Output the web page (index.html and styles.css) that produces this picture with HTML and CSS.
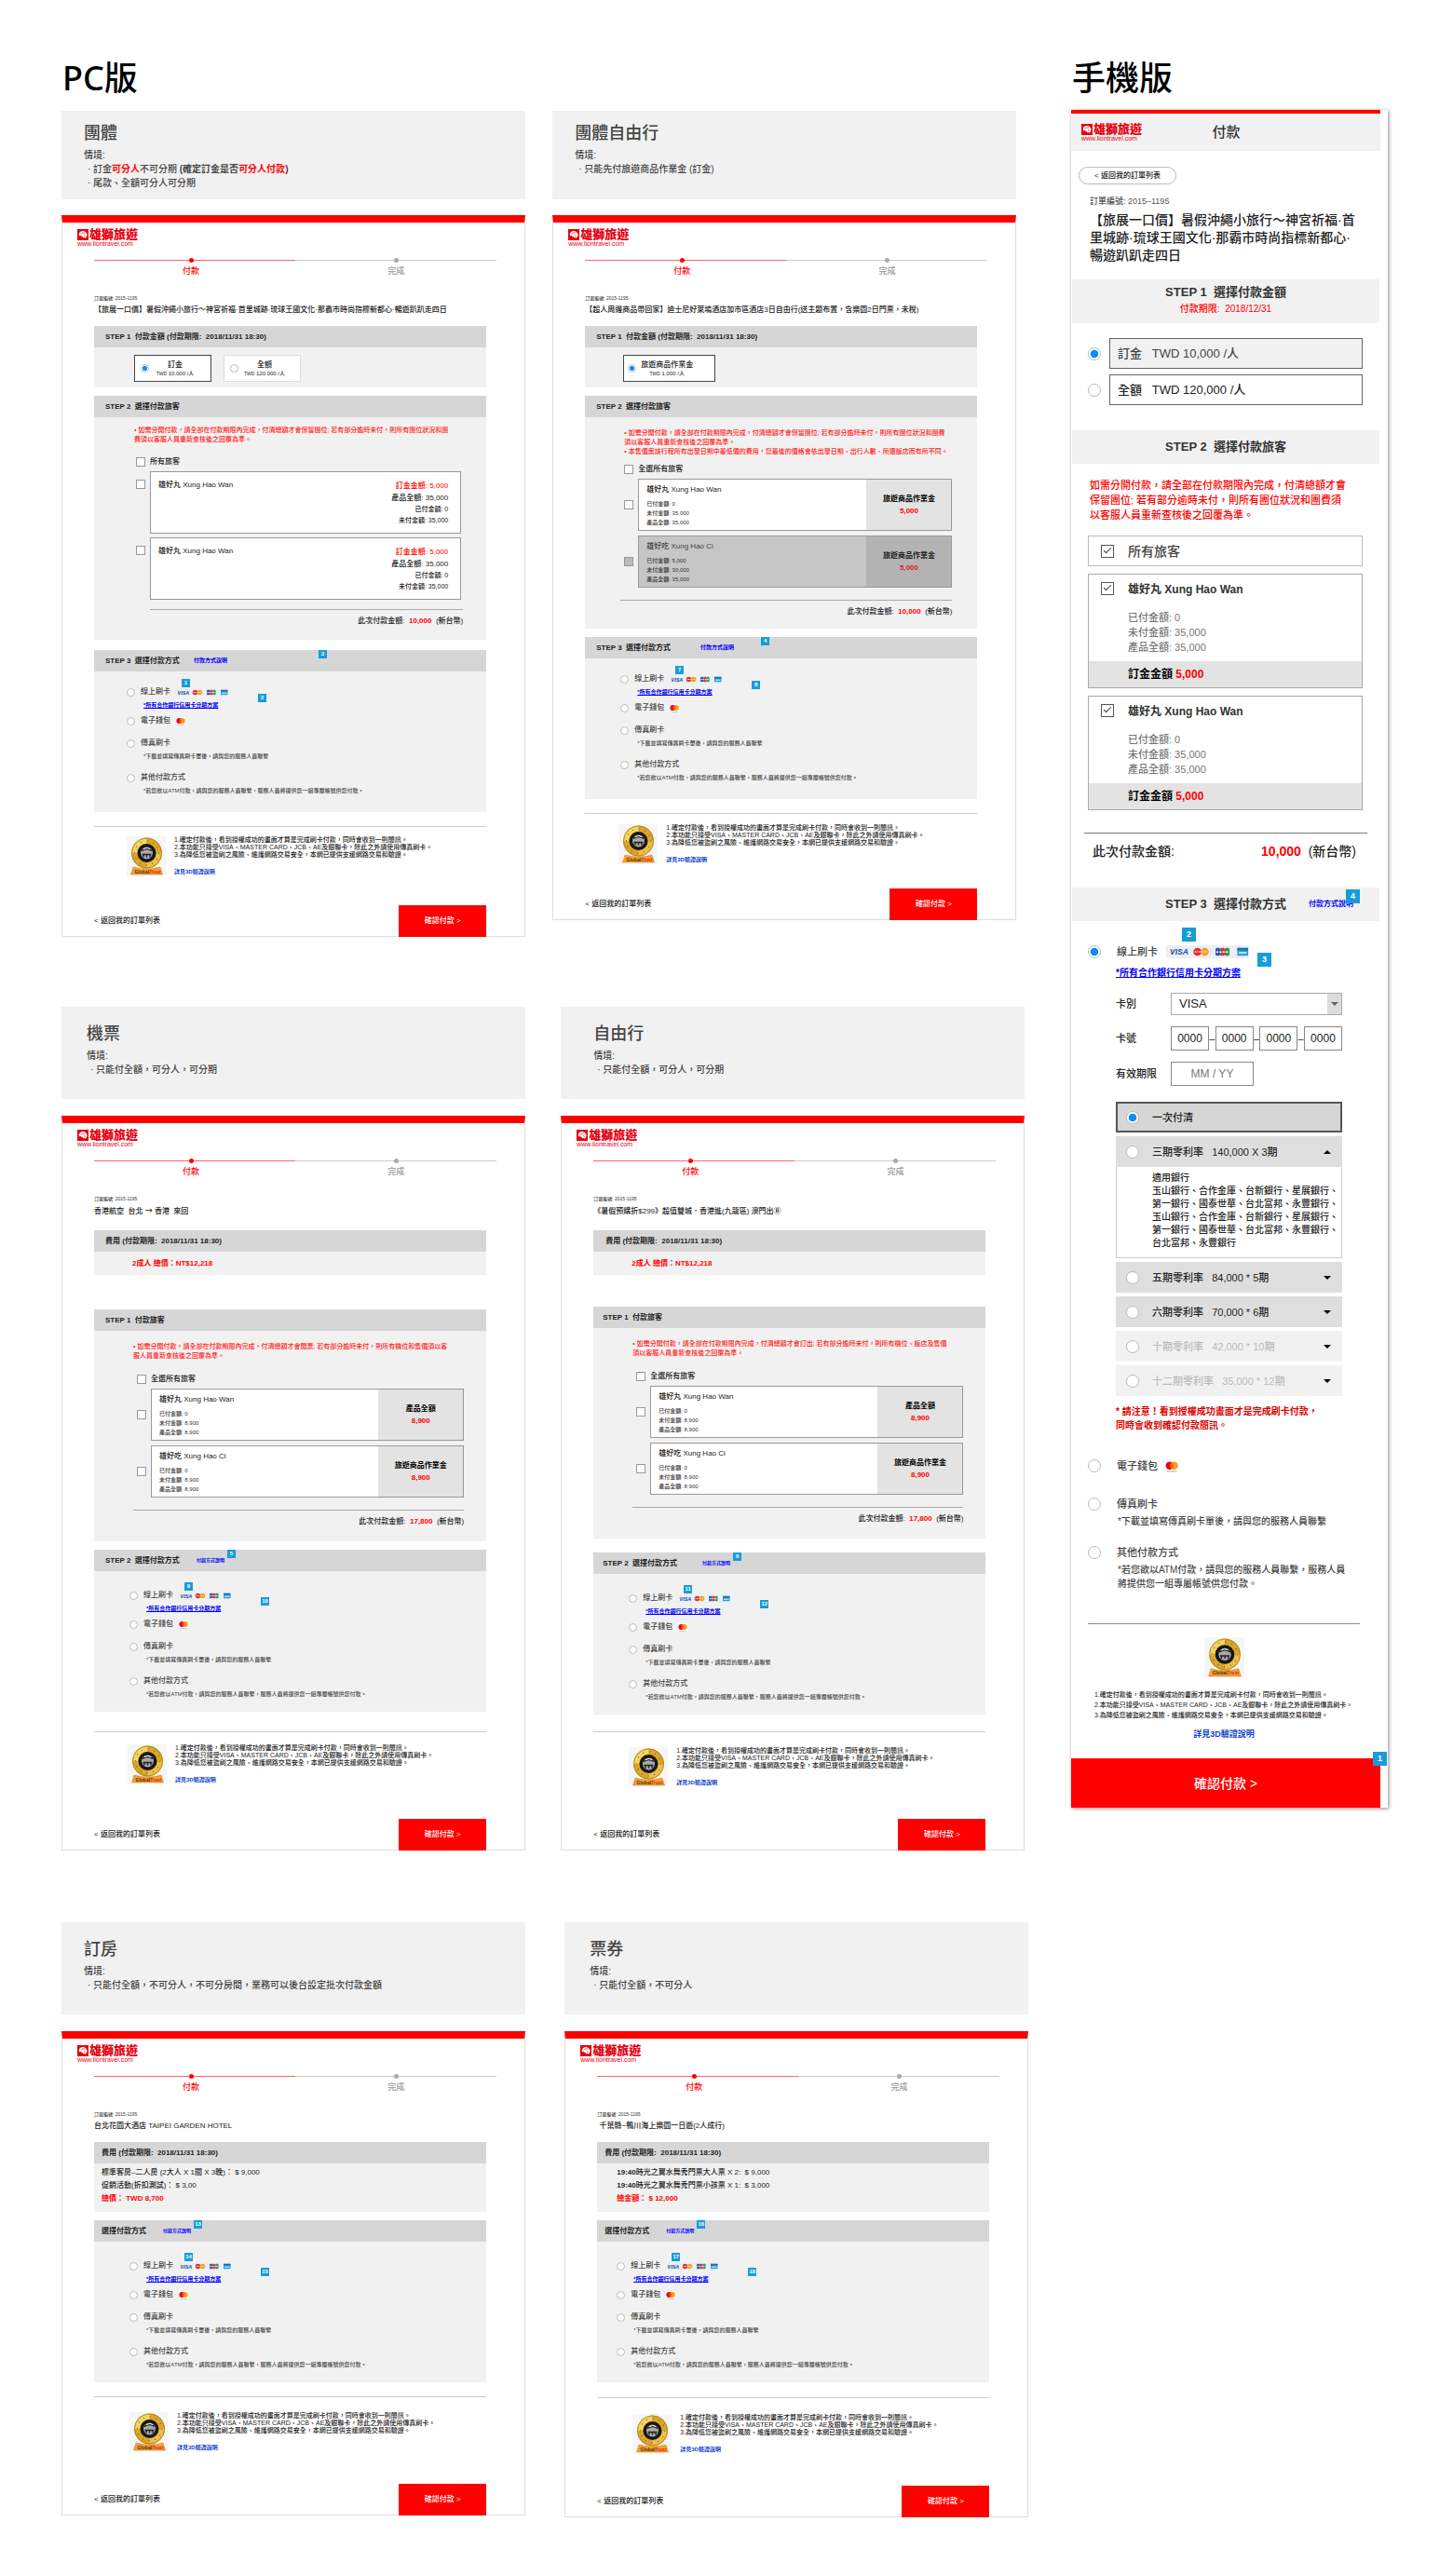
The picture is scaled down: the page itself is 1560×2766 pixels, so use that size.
FILE: index.html
```html
<!DOCTYPE html>
<html lang="zh-Hant">
<head>
<meta charset="utf-8">
<meta name="viewport" content="width=device-width, initial-scale=1">
<title>雄獅旅遊 付款流程</title>
<link rel="stylesheet" href="styles.css">
</head>
<body>
<svg class="sprite" aria-hidden="true">
  <symbol id="lion" viewBox="0 0 12 12">
    <rect width="12" height="12" fill="#e60012"/>
    <path d="M1.6 5.6C2.2 3 4.6 1.6 7 2.2c2 .4 3.4 2 3.6 4-.2 1.700-1.200 3-2.600 3.600l-.4-1.300-1 .9-.8-1.500-1.100.6-.3-1.400-2.200.2z" fill="#fff"/>
    <path d="M3.500 5.200c1-.9 2.300-.7 3 .1M5.500 3.600c1.500-.3 2.700.5 3.100 1.700M7 6.500c.8 0 1.500.5 1.700 1.300" fill="none" stroke="#e60012" stroke-width=".6"/>
  </symbol>
  <symbol id="cards" viewBox="0 0 57 9">
    <rect width="57" height="9" fill="#ebeff5"/>
    <text x="2.500" y="6.600" font-family="Liberation Sans, sans-serif" font-size="5.500" font-weight="700" font-style="italic" fill="#1a4f9c">VISA</text>
    <path d="M2.500 2.700h2l.8 1.600z" fill="#f2a72e"/>
    <circle cx="21.500" cy="4.500" r="2.800" fill="#e0322c"/><circle cx="26.500" cy="4.500" r="2.800" fill="#f4a020"/>
    <path d="M19.500 4.500h9" stroke="#fff" stroke-width=".8" stroke-dasharray="1 .5"/>
    <rect x="34" y="1.800" width="3.200" height="5.400" rx="1" fill="#2a5fb0"/><rect x="37.200" y="1.800" width="3.200" height="5.400" rx="1" fill="#d5304a"/><rect x="40.400" y="1.800" width="3.200" height="5.400" rx="1" fill="#2f9a4b"/>
    <path d="M34.500 4.600h8.600" stroke="#fff" stroke-width="1" stroke-dasharray="1.400 .8"/>
    <rect x="49" y="1.800" width="7.500" height="5.400" fill="#2c9ed3"/><path d="M49 1.800h7.500v1.700H49z" fill="#1b6eb0"/><path d="M50 5.200h5.500" stroke="#d9f1fb" stroke-width="1"/>
  </symbol>
  <symbol id="mc" viewBox="0 0 10 9">
    <rect width="10" height="9" fill="#fff"/>
    <circle cx="3.400" cy="4" r="3" fill="#eb001b"/><circle cx="6.800" cy="4" r="3" fill="#f79e1b"/>
    <path d="M5.100 1.500a3 3 0 0 1 0 5 3 3 0 0 1 0-5z" fill="#ff5f00"/>
    <path d="M1 8.300h8" stroke="#999" stroke-width=".6"/>
  </symbol>
  <symbol id="seal" viewBox="0 0 42 43">
    <rect width="42" height="43" fill="#f6f6f6"/>
    <circle cx="21.500" cy="18" r="16.500" fill="#d9a62b"/>
    <path d="M21.500 1.500A16.500 16.500 0 0 0 5 18h6a10.500 10.500 0 0 1 10.500-10.500z" fill="#f3d564"/>
    <path d="M21.500 34.500A16.500 16.500 0 0 0 38 18h-6a10.500 10.500 0 0 1-10.500 10.500z" fill="#eec04a"/>
    <circle cx="21.500" cy="18" r="16" fill="none" stroke="#a57a1a" stroke-width=".8"/>
    <circle cx="21.500" cy="18" r="13" fill="none" stroke="#5d430b" stroke-width="1.200" stroke-dasharray=".8 6"/>
    <circle cx="21.500" cy="18" r="10" fill="#171717"/>
    <circle cx="21.500" cy="18" r="6.500" fill="#a9a9a9"/>
    <path d="M16 15.500q5.500-4 11 0M16.500 19.500h10M18 22.500v-3m3.500 3v-3m3.500 3v-3" fill="none" stroke="#222" stroke-width="1.400"/>
    <path d="M18 13.500q4-2 7 0" stroke="#eee" stroke-width="1" fill="none"/>
    <path d="M7 33q14.500 4 29 0l2.500 8h-34z" fill="#f0a035" stroke="#c96d12" stroke-width=".4"/>
    <text x="8.500" y="39.500" font-family="Liberation Sans, sans-serif" font-size="5" font-weight="700" fill="#5a2c00">Global<tspan fill="#e2221a" font-style="italic">Trust</tspan></text>
  </symbol>
</svg>

<main class="board">
<div class="pc">
<h1 class="board-title">PC版</h1>

<div class="pair pair--one">

<section class="case">
  <header class="intro intro--short">
    <h2>團體</h2>
    <p>情境:</p>
    <ul><li>訂金<b class="red">可分人</b>不可分期 <b>(確定訂金是否<span class="red">可分人付款</span>)</b></li><li>尾款、全額可分人可分期</li></ul>
  </header>
  <article class="screen">
    <a class="logo" href="#"><span class="logo-row"><svg class="logo-mark"><use href="#lion"/></svg><span class="logo-name">雄獅旅遊</span></span><span class="logo-url">www.liontravel.com</span></a>
    <ol class="steps"><li class="on">付款</li><li>完成</li></ol>
    <p class="order">訂單編號: 2015-1195</p>
    <h3 class="tour">【旅展一口價】暑假沖繩小旅行～神宮祈福·首里城跡·琉球王國文化·那霸市時尚指標新都心·暢遊趴趴走四日</h3>
    <section class="block">
      <h4 class="bar">STEP 1&nbsp; 付款金額 (付款期限:&nbsp; 2018/11/31 18:30)</h4>
      <div class="amounts">
        <label class="amount amount--on"><input class="radio" type="radio" name="a1" checked><span class="amount-text">訂金<small><i>TWD</i> 10,000 /人</small></span></label>
        <label class="amount"><input class="radio" type="radio" name="a1"><span class="amount-text">全額<small><i>TWD</i> 120,000 /人</small></span></label>
      </div>
    </section>
    <section class="block gap-9">
      <h4 class="bar">STEP 2&nbsp; 選擇付款旅客</h4>
      <div class="people people--first">
        <p class="notice">• 如需分開付款，請全部在付款期限內完成，付清總額才會保留團位; 若有部分逾時未付，則所有團位狀況和團<br>費須以客服人員重新查核後之回覆為準。</p>
        <label class="all"><input class="check" type="checkbox">所有旅客</label>
        <label class="person person--top"><input class="check" type="checkbox"><span class="card card--wide"><span class="name">雄好丸 Xung Hao Wan</span><span class="sums"><span class="red">訂金金額: 5,000</span><span>產品全額: 35,000</span><small>已付金額: 0</small><small>未付金額: 35,000</small></span></span></label>
        <label class="person person--top"><input class="check" type="checkbox"><span class="card card--wide"><span class="name">雄好丸 Xung Hao Wan</span><span class="sums"><span class="red">訂金金額: 5,000</span><span>產品全額: 35,000</span><small>已付金額: 0</small><small>未付金額: 35,000</small></span></span></label>
        <p class="total">此次付款金額:&nbsp; <b class="red">10,000</b>&nbsp; (新台幣)</p>
      </div>
    </section>
    <section class="block gap-11">
      <h4 class="bar">STEP 3&nbsp; 選擇付款方式 <span class="help help--bold"><a href="#">付款方式說明</a><mark class="badge badge--far">3</mark></span></h4>
      <div class="methods">
        <div class="pay pay--card"><label class="pay-row"><input class="radio" type="radio" name="p1">線上刷卡</label><span class="brands"><svg class="strip"><use href="#cards"/></svg><mark class="badge badge--up">1</mark><mark class="badge badge--side">2</mark></span><a class="plan" href="#">*所有合作銀行信用卡分期方案</a></div>
        <div class="pay"><label class="pay-row"><input class="radio" type="radio" name="p1">電子錢包<svg class="wallet"><use href="#mc"/></svg></label></div>
        <div class="pay"><label class="pay-row"><input class="radio" type="radio" name="p1">傳真刷卡</label><p class="note">*下載並填寫傳真刷卡單後，請與您的服務人員聯繫</p></div>
        <div class="pay"><label class="pay-row"><input class="radio" type="radio" name="p1">其他付款方式</label><p class="note">*若您欲以ATM付款，請與您的服務人員聯繫，服務人員將提供您一組專屬帳號供您付款。</p></div>
      </div>
    </section>
    <section class="safety">
      <svg class="seal"><use href="#seal"/></svg>
      <div><ol class="rules"><li>1.確定付款後，看到授權成功的畫面才算是完成刷卡付款，同時會收到一則簡訊。</li><li>2.本功能只接受VISA、MASTER CARD、JCB、AE及銀聯卡，除此之外請使用傳真刷卡。</li><li>3.為降低您被盜刷之風險、維護網路交易安全，本網已提供支援網路交易和驗證。</li></ol><a class="more" href="#">詳見3D驗證說明</a></div>
    </section>
    <footer class="foot"><a href="#">&lt; 返回我的訂單列表</a><button class="confirm" type="button">確認付款 &gt;</button></footer>
  </article>
</section>

<section class="case case--b">
  <header class="intro intro--short">
    <h2>團體自由行</h2>
    <p>情境:</p>
    <ul><li>只能先付旅遊商品作業金 (訂金)</li></ul>
  </header>
  <article class="screen">
    <a class="logo" href="#"><span class="logo-row"><svg class="logo-mark"><use href="#lion"/></svg><span class="logo-name">雄獅旅遊</span></span><span class="logo-url">www.liontravel.com</span></a>
    <ol class="steps"><li class="on">付款</li><li>完成</li></ol>
    <p class="order">訂單編號: 2015-1195</p>
    <h3 class="tour">【超人周邊商品帶回家】迪士尼好萊塢酒店加市區酒店3日自由行(送主題布置，含樂園2日門票，未稅)</h3>
    <section class="block">
      <h4 class="bar">STEP 1&nbsp; 付款金額 (付款期限:&nbsp; 2018/11/31 18:30)</h4>
      <div class="amounts">
        <label class="amount amount--on amount--long"><input class="radio" type="radio" name="a2" checked><span class="amount-text">旅遊商品作業金<small><i>TWD</i> 1,000 /人</small></span></label>
      </div>
    </section>
    <section class="block gap-9">
      <h4 class="bar">STEP 2&nbsp; 選擇付款旅客</h4>
      <div class="people">
        <p class="notice">• 如需分開付款，請全部在付款期限內完成，付清總額才會保留團位; 若有部分逾時未付，則所有團位狀況和團費<br>須以客服人員重新查核後之回覆為準。<br>• 本售價案該行程所有出發日期中最低價的費用，您最後的價格會依出發日期、出行人數、所選飯店而有所不同。</p>
        <label class="all"><input class="check" type="checkbox">全選所有旅客</label>
        <label class="person"><input class="check" type="checkbox"><span class="card"><span class="detail"><span class="name">雄好丸 Xung Hao Wan</span><small>已付金額: 0</small><small>未付金額: 35,000</small><small>產品全額: 35,000</small></span><b class="due">旅遊商品作業金<span class="red">5,000</span></b></span></label>
        <label class="person"><input class="check" type="checkbox" disabled><span class="card card--off"><span class="detail"><span class="name">雄好吃 Xung Hao Ci</span><small>已付金額: 5,000</small><small>未付金額: 30,000</small><small>產品全額: 35,000</small></span><b class="due">旅遊商品作業金<span class="red">5,000</span></b></span></label>
        <p class="total">此次付款金額:&nbsp; <b class="red">10,000</b>&nbsp; (新台幣)</p>
      </div>
    </section>
    <section class="block gap-9">
      <h4 class="bar">STEP 3&nbsp; 選擇付款方式 <span class="help help--bold"><a href="#">付款方式說明</a><mark class="badge badge--mid">4</mark></span></h4>
      <div class="methods">
        <div class="pay pay--card"><label class="pay-row"><input class="radio" type="radio" name="p2">線上刷卡</label><span class="brands"><svg class="strip"><use href="#cards"/></svg><mark class="badge badge--up">7</mark><mark class="badge badge--side">8</mark></span><a class="plan" href="#">*所有合作銀行信用卡分期方案</a></div>
        <div class="pay"><label class="pay-row"><input class="radio" type="radio" name="p2">電子錢包<svg class="wallet"><use href="#mc"/></svg></label></div>
        <div class="pay"><label class="pay-row"><input class="radio" type="radio" name="p2">傳真刷卡</label><p class="note">*下載並填寫傳真刷卡單後，請與您的服務人員聯繫</p></div>
        <div class="pay"><label class="pay-row"><input class="radio" type="radio" name="p2">其他付款方式</label><p class="note">*若您欲以ATM付款，請與您的服務人員聯繫，服務人員將提供您一組專屬帳號供您付款。</p></div>
      </div>
    </section>
    <section class="safety">
      <svg class="seal"><use href="#seal"/></svg>
      <div><ol class="rules"><li>1.確定付款後，看到授權成功的畫面才算是完成刷卡付款，同時會收到一則簡訊。</li><li>2.本功能只接受VISA、MASTER CARD、JCB、AE及銀聯卡，除此之外請使用傳真刷卡。</li><li>3.為降低您被盜刷之風險、維護網路交易安全，本網已提供支援網路交易和驗證。</li></ol><a class="more" href="#">詳見3D驗證說明</a></div>
    </section>
    <footer class="foot"><a href="#">&lt; 返回我的訂單列表</a><button class="confirm" type="button">確認付款 &gt;</button></footer>
  </article>
</section>
</div>

<div class="pair pair--two">

<section class="case case--c">
  <header class="intro">
    <h2>機票</h2>
    <p>情境:</p>
    <ul><li>只能付全額，可分人，可分期</li></ul>
  </header>
  <article class="screen">
    <a class="logo" href="#"><span class="logo-row"><svg class="logo-mark"><use href="#lion"/></svg><span class="logo-name">雄獅旅遊</span></span><span class="logo-url">www.liontravel.com</span></a>
    <ol class="steps"><li class="on">付款</li><li>完成</li></ol>
    <p class="order">訂單編號: 2015-1195</p>
    <h3 class="tour">香港航空&nbsp; 台北 <span class="sign">→</span> 香港&nbsp; 來回</h3>
    <section class="block">
      <h4 class="bar">費用 (付款期限:&nbsp; 2018/11/31 18:30)</h4>
      <p class="fare"><b class="red">2成人 總價：NT$12,218</b></p>
    </section>
    <section class="block gap-37">
      <h4 class="bar">STEP 1&nbsp; 付款旅客</h4>
      <div class="people">
        <p class="notice">• 如需分開付款，請全部在付款期限內完成，付清總額才會開票; 若有部分逾時未付，則所有機位和售價須以客<br>服人員重新查核後之回覆為準。</p>
        <label class="all"><input class="check" type="checkbox">全選所有旅客</label>
        <label class="person"><input class="check" type="checkbox"><span class="card"><span class="detail"><span class="name">雄好丸 Xung Hao Wan</span><small>已付金額: 0</small><small>未付金額: 8,900</small><small>產品全額: 8,900</small></span><b class="due">產品全額<span class="red">8,900</span></b></span></label>
        <label class="person"><input class="check" type="checkbox"><span class="card"><span class="detail"><span class="name">雄好吃 Xung Hao Ci</span><small>已付金額: 0</small><small>未付金額: 8,900</small><small>產品全額: 8,900</small></span><b class="due">旅遊商品作業金<span class="red">8,900</span></b></span></label>
        <p class="total">此次付款金額:&nbsp; <b class="red">17,800</b>&nbsp; (新台幣)</p>
      </div>
    </section>
    <section class="block gap-9">
      <h4 class="bar">STEP 2&nbsp; 選擇付款方式 <span class="help"><a href="#">付款方式說明</a><mark class="badge badge--near">5</mark></span></h4>
      <div class="methods methods--low">
        <div class="pay pay--card"><label class="pay-row"><input class="radio" type="radio" name="p3">線上刷卡</label><span class="brands"><svg class="strip"><use href="#cards"/></svg><mark class="badge badge--up">9</mark><mark class="badge badge--side">10</mark></span><a class="plan" href="#">*所有合作銀行信用卡分期方案</a></div>
        <div class="pay"><label class="pay-row"><input class="radio" type="radio" name="p3">電子錢包<svg class="wallet"><use href="#mc"/></svg></label></div>
        <div class="pay"><label class="pay-row"><input class="radio" type="radio" name="p3">傳真刷卡</label><p class="note">*下載並填寫傳真刷卡單後，請與您的服務人員聯繫</p></div>
        <div class="pay"><label class="pay-row"><input class="radio" type="radio" name="p3">其他付款方式</label><p class="note">*若您欲以ATM付款，請與您的服務人員聯繫，服務人員將提供您一組專屬帳號供您付款。</p></div>
      </div>
    </section>
    <section class="safety">
      <svg class="seal"><use href="#seal"/></svg>
      <div><ol class="rules"><li>1.確定付款後，看到授權成功的畫面才算是完成刷卡付款，同時會收到一則簡訊。</li><li>2.本功能只接受VISA、MASTER CARD、JCB、AE及銀聯卡，除此之外請使用傳真刷卡。</li><li>3.為降低您被盜刷之風險、維護網路交易安全，本網已提供支援網路交易和驗證。</li></ol><a class="more" href="#">詳見3D驗證說明</a></div>
    </section>
    <footer class="foot"><a href="#">&lt; 返回我的訂單列表</a><button class="confirm" type="button">確認付款 &gt;</button></footer>
  </article>
</section>

<section class="case case--d">
  <header class="intro">
    <h2>自由行</h2>
    <p>情境:</p>
    <ul><li>只能付全額，可分人，可分期</li></ul>
  </header>
  <article class="screen">
    <a class="logo" href="#"><span class="logo-row"><svg class="logo-mark"><use href="#lion"/></svg><span class="logo-name">雄獅旅遊</span></span><span class="logo-url">www.liontravel.com</span></a>
    <ol class="steps"><li class="on">付款</li><li>完成</li></ol>
    <p class="order">訂單編號: 2015-1195</p>
    <h3 class="tour">《暑假預購折$299》超值雙城．香港進(九龍區) 澳門出<span class="sign">Ⓑ</span></h3>
    <section class="block">
      <h4 class="bar">費用 (付款期限:&nbsp; 2018/11/31 18:30)</h4>
      <p class="fare"><b class="red">2成人 總價：NT$12,218</b></p>
    </section>
    <section class="block gap-34">
      <h4 class="bar bar--tight">STEP 1&nbsp; 付款旅客</h4>
      <div class="people">
        <p class="notice">• 如需分開付款，請全部在付款期限內完成，付清總額才會訂出; 若有部分逾時未付，則所有機位、飯店及售價<br>須以客服人員重新查核後之回覆為準。</p>
        <label class="all"><input class="check" type="checkbox">全選所有旅客</label>
        <label class="person"><input class="check" type="checkbox"><span class="card"><span class="detail"><span class="name">雄好丸 Xung Hao Wan</span><small>已付金額: 0</small><small>未付金額: 8,900</small><small>產品全額: 8,900</small></span><b class="due">產品全額<span class="red">8,900</span></b></span></label>
        <label class="person"><input class="check" type="checkbox"><span class="card"><span class="detail"><span class="name">雄好吃 Xung Hao Ci</span><small>已付金額: 0</small><small>未付金額: 8,900</small><small>產品全額: 8,900</small></span><b class="due">旅遊商品作業金<span class="red">8,900</span></b></span></label>
        <p class="total">此次付款金額:&nbsp; <b class="red">17,800</b>&nbsp; (新台幣)</p>
      </div>
    </section>
    <section class="block gap-15">
      <h4 class="bar bar--tight">STEP 2&nbsp; 選擇付款方式 <span class="help"><a href="#">付款方式說明</a><mark class="badge badge--near">6</mark></span></h4>
      <div class="methods methods--low">
        <div class="pay pay--card"><label class="pay-row"><input class="radio" type="radio" name="p4">線上刷卡</label><span class="brands"><svg class="strip"><use href="#cards"/></svg><mark class="badge badge--up">11</mark><mark class="badge badge--side">12</mark></span><a class="plan" href="#">*所有合作銀行信用卡分期方案</a></div>
        <div class="pay"><label class="pay-row"><input class="radio" type="radio" name="p4">電子錢包<svg class="wallet"><use href="#mc"/></svg></label></div>
        <div class="pay"><label class="pay-row"><input class="radio" type="radio" name="p4">傳真刷卡</label><p class="note">*下載並填寫傳真刷卡單後，請與您的服務人員聯繫</p></div>
        <div class="pay"><label class="pay-row"><input class="radio" type="radio" name="p4">其他付款方式</label><p class="note">*若您欲以ATM付款，請與您的服務人員聯繫，服務人員將提供您一組專屬帳號供您付款。</p></div>
      </div>
    </section>
    <section class="safety">
      <svg class="seal"><use href="#seal"/></svg>
      <div><ol class="rules"><li>1.確定付款後，看到授權成功的畫面才算是完成刷卡付款，同時會收到一則簡訊。</li><li>2.本功能只接受VISA、MASTER CARD、JCB、AE及銀聯卡，除此之外請使用傳真刷卡。</li><li>3.為降低您被盜刷之風險、維護網路交易安全，本網已提供支援網路交易和驗證。</li></ol><a class="more" href="#">詳見3D驗證說明</a></div>
    </section>
    <footer class="foot"><a href="#">&lt; 返回我的訂單列表</a><button class="confirm" type="button">確認付款 &gt;</button></footer>
  </article>
</section>
</div>

<div class="pair pair--three">

<section class="case case--e">
  <header class="intro">
    <h2>訂房</h2>
    <p>情境:</p>
    <ul><li>只能付全額，不可分人，不可分房間，業務可以後台設定批次付款金額</li></ul>
  </header>
  <article class="screen">
    <a class="logo" href="#"><span class="logo-row"><svg class="logo-mark"><use href="#lion"/></svg><span class="logo-name">雄獅旅遊</span></span><span class="logo-url">www.liontravel.com</span></a>
    <ol class="steps"><li class="on">付款</li><li>完成</li></ol>
    <p class="order">訂單編號: 2015-1195</p>
    <h3 class="tour">台北花園大酒店 TAIPEI GARDEN HOTEL</h3>
    <section class="block">
      <h4 class="bar">費用 (付款期限:&nbsp; 2018/11/31 18:30)</h4>
      <p class="fare fare--lines">標準客房–二人房 (2大人 X 1間 X 3晚)：&nbsp;$ 9,000<br>促銷活動(折扣測試)：&nbsp;$ 3,00<br><b class="red">總價：&nbsp;TWD 8,700</b></p>
    </section>
    <section class="block gap-9">
      <h4 class="bar">選擇付款方式 <span class="help"><a href="#">付款方式說明</a><mark class="badge badge--near">13</mark></span></h4>
      <div class="methods methods--low">
        <div class="pay pay--card"><label class="pay-row"><input class="radio" type="radio" name="p5">線上刷卡</label><span class="brands"><svg class="strip"><use href="#cards"/></svg><mark class="badge badge--up">14</mark><mark class="badge badge--side">15</mark></span><a class="plan" href="#">*所有合作銀行信用卡分期方案</a></div>
        <div class="pay"><label class="pay-row"><input class="radio" type="radio" name="p5">電子錢包<svg class="wallet"><use href="#mc"/></svg></label></div>
        <div class="pay"><label class="pay-row"><input class="radio" type="radio" name="p5">傳真刷卡</label><p class="note">*下載並填寫傳真刷卡單後，請與您的服務人員聯繫</p></div>
        <div class="pay"><label class="pay-row"><input class="radio" type="radio" name="p5">其他付款方式</label><p class="note">*若您欲以ATM付款，請與您的服務人員聯繫，服務人員將提供您一組專屬帳號供您付款。</p></div>
      </div>
    </section>
    <section class="safety">
      <svg class="seal"><use href="#seal"/></svg>
      <div><ol class="rules"><li>1.確定付款後，看到授權成功的畫面才算是完成刷卡付款，同時會收到一則簡訊。</li><li>2.本功能只接受VISA、MASTER CARD、JCB、AE及銀聯卡，除此之外請使用傳真刷卡。</li><li>3.為降低您被盜刷之風險、維護網路交易安全，本網已提供支援網路交易和驗證。</li></ol><a class="more" href="#">詳見3D驗證說明</a></div>
    </section>
    <footer class="foot"><a href="#">&lt; 返回我的訂單列表</a><button class="confirm" type="button">確認付款 &gt;</button></footer>
  </article>
</section>

<section class="case case--f">
  <header class="intro">
    <h2>票券</h2>
    <p>情境:</p>
    <ul><li>只能付全額，不可分人</li></ul>
  </header>
  <article class="screen">
    <a class="logo" href="#"><span class="logo-row"><svg class="logo-mark"><use href="#lion"/></svg><span class="logo-name">雄獅旅遊</span></span><span class="logo-url">www.liontravel.com</span></a>
    <ol class="steps"><li class="on">付款</li><li>完成</li></ol>
    <p class="order">訂單編號: 2015-1195</p>
    <h3 class="tour">&nbsp;千葉縣~鴨川海上樂園一日遊(2人成行)</h3>
    <section class="block">
      <h4 class="bar">費用 (付款期限:&nbsp; 2018/11/31 18:30)</h4>
      <p class="fare fare--lines"><b>19:40</b>時光之翼水舞秀門票大人票 X 2:&nbsp; $ 9,000<br><b>19:40</b>時光之翼水舞秀門票小孩票 X 1:&nbsp; $ 3,000<br><b class="red">總金額：&nbsp;$ 12,000</b></p>
    </section>
    <section class="block gap-9">
      <h4 class="bar">選擇付款方式 <span class="help"><a href="#">付款方式說明</a><mark class="badge badge--near">16</mark></span></h4>
      <div class="methods methods--low">
        <div class="pay pay--card"><label class="pay-row"><input class="radio" type="radio" name="p6">線上刷卡</label><span class="brands"><svg class="strip"><use href="#cards"/></svg><mark class="badge badge--up">17</mark><mark class="badge badge--side">18</mark></span><a class="plan" href="#">*所有合作銀行信用卡分期方案</a></div>
        <div class="pay"><label class="pay-row"><input class="radio" type="radio" name="p6">電子錢包<svg class="wallet"><use href="#mc"/></svg></label></div>
        <div class="pay"><label class="pay-row"><input class="radio" type="radio" name="p6">傳真刷卡</label><p class="note">*下載並填寫傳真刷卡單後，請與您的服務人員聯繫</p></div>
        <div class="pay"><label class="pay-row"><input class="radio" type="radio" name="p6">其他付款方式</label><p class="note">*若您欲以ATM付款，請與您的服務人員聯繫，服務人員將提供您一組專屬帳號供您付款。</p></div>
      </div>
    </section>
    <section class="safety">
      <svg class="seal"><use href="#seal"/></svg>
      <div><ol class="rules"><li>1.確定付款後，看到授權成功的畫面才算是完成刷卡付款，同時會收到一則簡訊。</li><li>2.本功能只接受VISA、MASTER CARD、JCB、AE及銀聯卡，除此之外請使用傳真刷卡。</li><li>3.為降低您被盜刷之風險、維護網路交易安全，本網已提供支援網路交易和驗證。</li></ol><a class="more" href="#">詳見3D驗證說明</a></div>
    </section>
    <footer class="foot"><a href="#">&lt; 返回我的訂單列表</a><button class="confirm" type="button">確認付款 &gt;</button></footer>
  </article>
</section>
</div>
</div>

<div class="mobile">
<h1 class="board-title">手機版</h1>
<article class="phone">
  <header class="m-head">
    <a class="logo" href="#"><span class="logo-row"><svg class="logo-mark"><use href="#lion"/></svg><span class="logo-name">雄獅旅遊</span></span><span class="logo-url">www.liontravel.com</span></a>
    <h2>付款</h2>
  </header>
  <a class="m-back" href="#">&lt; 返回我的訂單列表</a>
  <p class="m-order">訂單編號: 2015–1195</p>
  <h3 class="m-tour">【旅展一口價】暑假沖繩小旅行～神宮祈福·首<br>里城跡·琉球王國文化·那霸市時尚指標新都心·<br>暢遊趴趴走四日</h3>

  <div class="m-bar m-bar--two"><h4>STEP 1&nbsp; 選擇付款金額</h4><p>付款期限:&nbsp; 2018/12/31</p></div>
  <div class="m-amounts">
    <label><input class="radio" type="radio" name="ma" checked><span class="m-box m-box--on">訂金&nbsp;&nbsp; TWD 10,000 /人</span></label>
    <label><input class="radio" type="radio" name="ma"><span class="m-box">全額&nbsp;&nbsp; TWD 120,000 /人</span></label>
  </div>

  <div class="m-bar m-bar--gap"><h4>STEP 2&nbsp; 選擇付款旅客</h4></div>
  <p class="m-notice">如需分開付款，請全部在付款期限內完成，付清總額才會<br>保留團位; 若有部分逾時未付，則所有團位狀況和團費須<br>以客服人員重新查核後之回覆為準。</p>
  <div class="m-people">
    <label class="m-all"><input class="check" type="checkbox" checked>所有旅客</label>
    <label class="m-card"><span class="m-card-main"><input class="check" type="checkbox" checked><span class="m-detail"><b>雄好丸 Xung Hao Wan</b><span>已付金額: 0</span><span>未付金額: 35,000</span><span>產品全額: 35,000</span></span></span><b class="m-due">訂金金額 <span class="red">5,000</span></b></label>
    <label class="m-card"><span class="m-card-main"><input class="check" type="checkbox" checked><span class="m-detail"><b>雄好丸 Xung Hao Wan</b><span>已付金額: 0</span><span>未付金額: 35,000</span><span>產品全額: 35,000</span></span></span><b class="m-due">訂金金額 <span class="red">5,000</span></b></label>
  </div>
  <p class="m-total"><span>此次付款金額:</span><span><b class="red">10,000</b>&nbsp; (新台幣)</span></p>

  <div class="m-bar"><h4>STEP 3&nbsp; 選擇付款方式</h4><span class="m-help"><a href="#">付款方式說明</a><mark class="badge">4</mark></span></div>
  <div class="m-methods">
    <div class="m-card-row"><label class="m-pay"><input class="radio" type="radio" name="mp" checked>線上刷卡</label><span class="brands"><svg class="strip"><use href="#cards"/></svg><mark class="badge badge--up">2</mark><mark class="badge badge--side">3</mark></span></div>
    <div class="m-sub">
      <a class="plan" href="#">*所有合作銀行信用卡分期方案</a>
      <div class="field"><label for="kind">卡別</label><span class="select"><select id="kind"><option>VISA</option></select></span></div>
      <div class="field"><label for="no1">卡號</label><span class="digits"><input id="no1" type="text" value="0000"><i>–</i><input type="text" value="0000" aria-label="卡號 2"><i>–</i><input type="text" value="0000" aria-label="卡號 3"><i>–</i><input type="text" value="0000" aria-label="卡號 4"></span></div>
      <div class="field"><label for="exp">有效期限</label><input class="exp" id="exp" type="text" placeholder="MM / YY"></div>
      <div class="plans">
        <label class="term term--on"><input class="radio" type="radio" name="mt" checked>一次付清</label>
        <div class="term-open">
          <label class="term"><input class="radio" type="radio" name="mt"><span>三期零利率&nbsp;&nbsp; 140,000 X 3期</span><i class="caret caret--up"></i></label>
          <p>適用銀行<br>玉山銀行、合作金庫、台新銀行、星展銀行、<br>第一銀行、國泰世華、台北富邦、永豐銀行、<br>玉山銀行、合作金庫、台新銀行、星展銀行、<br>第一銀行、國泰世華、台北富邦、永豐銀行、<br>台北富邦、永豐銀行</p>
        </div>
        <label class="term"><input class="radio" type="radio" name="mt"><span>五期零利率&nbsp;&nbsp; 84,000 * 5期</span><i class="caret"></i></label>
        <label class="term"><input class="radio" type="radio" name="mt"><span>六期零利率&nbsp;&nbsp; 70,000 * 6期</span><i class="caret"></i></label>
        <label class="term term--off"><input class="radio" type="radio" name="mt" disabled><span>十期零利率&nbsp;&nbsp; 42,000 * 10期</span><i class="caret"></i></label>
        <label class="term term--off"><input class="radio" type="radio" name="mt" disabled><span>十二期零利率&nbsp;&nbsp; 35,000 * 12期</span><i class="caret"></i></label>
      </div>
      <p class="warn">* 請注意！看到授權成功畫面才是完成刷卡付款，<br>同時會收到確認付款簡訊。</p>
    </div>
    <label class="m-pay m-pay--wallet"><input class="radio" type="radio" name="mp">電子錢包<svg class="wallet"><use href="#mc"/></svg></label>
    <label class="m-pay m-pay--fax"><input class="radio" type="radio" name="mp">傳真刷卡</label>
    <p class="m-note">*下載並填寫傳真刷卡單後，請與您的服務人員聯繫</p>
    <label class="m-pay m-pay--other"><input class="radio" type="radio" name="mp">其他付款方式</label>
    <p class="m-note">*若您欲以ATM付款，請與您的服務人員聯繫，服務人員<br>將提供您一組專屬帳號供您付款。</p>
  </div>
  <section class="m-safety">
    <svg class="seal"><use href="#seal"/></svg>
    <ol class="rules"><li>1.確定付款後，看到授權成功的畫面才算是完成刷卡付款，同時會收到一則簡訊。</li><li>2.本功能只接受VISA、MASTER CARD、JCB、AE及銀聯卡，除此之外請使用傳真刷卡。</li><li>3.為降低您被盜刷之風險、維護網路交易安全，本網已提供支援網路交易和驗證。</li></ol>
    <a class="more" href="#">詳見3D驗證說明</a>
  </section>
  <div class="m-foot"><button class="m-confirm" type="button">確認付款 &gt;</button><mark class="badge">1</mark></div>
</article>
</div>
</main>
</body>
</html>
```

FILE: styles.css
```css
*, *::before, *::after { box-sizing: border-box; }

body {
  margin: 0;
  background: #fff;
  color: #333;
  font-family: "Liberation Sans", "Noto Sans CJK TC", sans-serif;
  font-size: 8px;
  font-weight: 500;
  line-height: 12px;
}

h1, h2, h3, h4, p, ul, ol { margin: 0; padding: 0; font: inherit; }
ul, ol { list-style: none; }
a { color: inherit; text-decoration: none; }
i { font-style: normal; }
small { font-size: 6px; }
svg { display: block; flex: none; }
button, input, select { margin: 0; padding: 0; font: inherit; color: inherit; }
.sprite { display: none; }
.red { color: #f00; }

/* ---------- board ---------- */
.board {
  display: grid;
  grid-template-columns: minmax(0, 1038fr) minmax(0, 340fr);
  column-gap: 46px;
  align-items: start;
  padding: 60px 70px 64px 66px;
}
.board-title {
  margin-left: 1px;
  padding-bottom: 11px;
  color: #000;
  font-family: "Noto Sans", "Noto Sans CJK TC", sans-serif;
  font-size: 36px;
  font-weight: 500;
  line-height: 48px;
}
.mobile .board-title { padding-bottom: 10px; }
.pair { display: flex; align-items: flex-start; }
.pair--one { gap: 29px; }
.pair--two { gap: 38px; margin-top: 75px; }
.pair--three { gap: 42px; margin-top: 77px; }
.case { flex: none; width: 48%; }

/* ---------- scenario summary ---------- */
.intro {
  height: 99px;
  margin-bottom: 18px;
  padding: 17px 0 0 24px;
  background: #f1f1f1;
  color: #444;
  font-size: 10px;
  line-height: 15px;
}
.intro--short { height: 95px; margin-bottom: 17px; padding-top: 12px; }
.intro h2 { margin-bottom: 3px; font-size: 18px; line-height: 25px; }
.intro li { padding-left: 10px; position: relative; }
.intro li::before { content: "·"; position: absolute; left: 4px; }
.case--c .intro { padding-left: 27px; }
.case--d .intro { padding-left: 35px; }
.case--f .intro { padding-left: 27px; }

/* ---------- desktop screen ---------- */
.screen {
  padding: 6px 41px 0 34px;
  border: 1px solid #ddd;
  border-top: 8px solid #f00;
  white-space: nowrap;
}
.logo { display: block; width: 66px; height: 20px; color: #e60012; }
.screen .logo { margin-left: -18px; }
.logo-row { display: flex; gap: 1px; height: 13px; align-items: center; }
.logo-mark { width: 12px; height: 12px; }
.logo-name { font-size: 13px; font-weight: 900; line-height: 13px; }
.logo-url { display: block; font-size: 7px; line-height: 7px; }

.steps {
  display: grid;
  grid-template-columns: 1fr 1fr;
  margin: 12px -11px 0 0;
  background: linear-gradient(90deg, #f66 50%, #ccc 50%) 0 2px / 100% 1px no-repeat;
  color: #999;
  font-size: 9px;
  text-align: center;
}
.steps li::before {
  content: "";
  display: block;
  width: 5px;
  height: 5px;
  margin: 0 auto 3px;
  border-radius: 50%;
  background: #aaa;
}
.steps .on { padding-right: 8px; color: #f00; }
.steps .on::before { background: #f00; }

.order { margin-top: 19px; font-size: 5px; line-height: 8px; }
.tour { margin: 3px 0 11px; color: #222; }
.sign { font-family: "Noto Sans CJK TC", sans-serif; }
.case--c .tour, .case--d .tour { margin-bottom: 14px; }

.block { background: #f1f1f1; }
.gap-9 { margin-top: 9px; }
.gap-11 { margin-top: 11px; }
.gap-15 { margin-top: 15px; }
.gap-34 { margin-top: 34px; }
.gap-37 { margin-top: 37px; }
.bar {
  display: flex;
  align-items: center;
  height: 23px;
  padding-left: 12px;
  background: #d6d6d6;
  color: #222;
  font-weight: 700;
}
.case--e .bar, .case--f .bar { padding-left: 8px; }
.case--d .bar { padding-left: 13px; }
.case--d .bar--tight { padding-left: 10px; }
.help {
  position: relative;
  margin-left: 18px;
  color: #00f;
  font-size: 5px;
  line-height: 11px;
}
.help--bold { margin-left: 15px; font-size: 6px; }
.case--b .help { margin-left: 32px; }
.case--d .help { margin-left: 27px; }

.fare { padding-left: 41px; line-height: 25px; color: #222; }
.fare--lines { padding: 3px 0 7px 8px; line-height: 14px; }
.case--f .fare--lines { padding-left: 21px; }

.badge {
  position: absolute;
  width: 9px;
  height: 9px;
  background: #189cd8;
  color: #fff;
  font-size: 6px;
  font-weight: 700;
  line-height: 9px;
  text-align: center;
}
.badge--far { top: -6px; left: 134px; }
.badge--mid { top: -6px; left: 65px; }
.badge--near { top: -6px; left: 33px; }
.badge--up { top: -10px; left: 7px; }
.badge--side { top: 6px; left: 89px; }

/* ---------- inputs ---------- */
.radio, .check {
  flex: none;
  width: 9px;
  height: 9px;
  appearance: none;
  border: 1px solid #bbb;
  background: #fff;
}
.radio { border-radius: 50%; }
.radio:checked { background: radial-gradient(circle, #0d8ef0 0 45%, #fff 55%); }
.check { width: 10px; height: 10px; border-color: #999; }
.check:disabled { background: #bbb; }

/* ---------- amount choice ---------- */
.amounts { display: flex; gap: 13px; height: 43px; padding: 8px 0 0 43px; }
.case--b .amounts { padding-left: 41px; }
.amount {
  display: flex;
  align-items: center;
  width: 83px;
  height: 29px;
  padding: 0 22px 0 6px;
  border: 1px solid #ddd;
  background: #fff;
  color: #222;
}
.amount--on { border-color: #444; }
.amount--long { width: 99px; padding: 0 20px 0 4px; }
.amount-text { flex: 1; margin-right: -12px; text-align: center; line-height: 11px; }
.amount--long .amount-text { margin-right: 0; padding-left: 2px; }
.amount-text small { display: block; line-height: 9px; }
.amount-text i { font-size: 5px; }

/* ---------- travellers ---------- */
.people { padding: 12px 24px 15px 46px; }
.case--b .people { padding: 12px 27px 12px 42px; }
.people--first { padding: 9px 27px 14px 45px; }
.notice { margin-bottom: 14px; margin-left: -4px; color: #f22; font-size: 7px; line-height: 10px; }
.case--b .notice { margin: 0 0 8px; }
.people--first .notice { margin: 0 0 13px -2px; }
.all { display: flex; align-items: center; gap: 5px; margin-bottom: 4px; color: #222; }
.person { display: flex; align-items: center; gap: 5px; margin-bottom: 5px; }
.person--top { align-items: flex-start; margin-bottom: 4px; }
.person--top .check { margin-top: 9px; }
.card {
  display: flex;
  flex: 1;
  height: 56px;
  border: 1px solid #999;
  background: #fff;
  line-height: 10px;
}
.card--wide { justify-content: space-between; height: 67px; padding: 8px 13px 0 8px; }
.name { line-height: 12px; color: #222; }
.sums { display: flex; flex-direction: column; text-align: right; line-height: 13px; color: #222; }
.sums small { font-size: 7px; line-height: 12px; }
.detail { flex: 1; display: flex; flex-direction: column; padding: 5px 0 0 8px; }
.detail .name { margin-bottom: 4px; }
.detail small { line-height: 10px; }
.due {
  display: flex;
  flex-direction: column;
  justify-content: center;
  width: 91px;
  padding-bottom: 1px;
  background: #e3e3e3;
  color: #000;
  line-height: 13px;
  text-align: center;
}
.card--off { background: #c6c6c6; }
.card--off .due { background: #b3b3b3; color: #222; }
.card--off .name { color: #444; }
.card--off .red { color: #d22; }
.total {
  margin: 13px 0 0 -4px;
  padding-top: 6px;
  border-top: 1px solid #aaa;
  text-align: right;
  color: #222;
}
.people--first .total { margin: 10px -2px 0 15px; }

/* ---------- payment methods ---------- */
.methods { padding: 16px 0 18px 35px; color: #444; }
.methods--low { padding: 20px 0 14px 38px; }
.case--b .methods { padding-left: 38px; }
.case--f .methods { padding-left: 21px; }
.pay + .pay { margin-top: 12px; }
.pay--card + .pay { margin-top: 6px; }
.pay--card { display: flex; flex-wrap: wrap; align-items: center; column-gap: 5px; }
.pay-row { display: flex; align-items: center; gap: 6px; }
.brands { position: relative; }
.strip { width: 57px; height: 9px; }
.wallet { width: 10px; height: 9px; }
.plan {
  width: 100%;
  margin: 3px 0 0 18px;
  color: #00f;
  font-size: 6px;
  font-weight: 700;
  line-height: 10px;
  text-decoration: underline;
}
.note { margin: 3px 0 0 18px; font-size: 6px; line-height: 10px; }

/* ---------- security note and footer ---------- */
.safety {
  display: flex;
  gap: 9px;
  margin-top: 15px;
  padding: 10px 0 31px 35px;
  border-top: 1px solid #ccc;
}
.case--b .safety { padding: 11px 0 26px 36px; }
.case--c .safety { margin-top: 21px; padding: 13px 0 37px 36px; }
.case--d .safety { margin-top: 18px; padding: 16px 0 34px 38px; }
.case--e .safety { padding: 16px 0 34px 38px; }
.case--f .safety { margin-top: 16px; padding: 17px 0 34px 38px; }
.seal { width: 42px; height: 43px; }
.rules { color: #222; font-size: 7px; line-height: 8px; }
.more { display: block; margin-top: 9px; color: #14c; font-size: 6px; font-weight: 700; line-height: 10px; }
.foot { display: flex; justify-content: space-between; align-items: center; margin-bottom: -1px; color: #222; }
.confirm { width: 94px; height: 34px; border: 0; background: #f00; color: #fff; }

/* ---------- phone screen ---------- */
.phone {
  padding-right: 8px;
  background: #fff;
  box-shadow: 1px 1px 4px rgba(0, 0, 0, .45);
  white-space: nowrap;
}
.m-head {
  display: grid;
  grid-template-columns: 1fr auto 1fr;
  align-items: center;
  height: 44px;
  padding: 0 0 0 11px;
  border-top: 4px solid #f00;
  background: #f1f1f1;
}
.m-head h2 { padding-right: 10px; font-size: 15px; line-height: 20px; }
.m-back {
  display: block;
  width: 105px;
  margin: 17px 0 12px 8px;
  border: 1px solid #bbb;
  border-radius: 10px;
  color: #222;
  line-height: 17px;
  text-align: center;
}
.m-order { margin-left: 20px; color: #555; font-size: 9px; }
.m-tour { margin: 5px 0 16px 20px; color: #222; font-size: 14px; line-height: 19px; }
.m-bar {
  position: relative;
  margin: 0 1px;
  padding: 10px 0;
  background: #f1f1f1;
  text-align: center;
  color: #333;
  font-size: 13px;
  font-weight: 700;
  line-height: 16px;
}
.m-bar--gap { margin-top: 27px; }
.m-bar--two { padding: 6px 0 8px; }
.m-bar p { margin-top: 3px; color: #f00; font-size: 10px; font-weight: 500; line-height: 14px; }
.m-help { position: absolute; top: 10px; left: 254px; color: #00f; font-size: 8px; }
.m-help .badge { top: -8px; left: 40px; }
.mobile .radio, .mobile .check { width: 14px; height: 14px; }
.mobile .badge { width: 15px; height: 15px; font-size: 9px; line-height: 15px; }

.m-amounts { display: grid; gap: 6px; padding: 16px 19px 0 18px; color: #222; font-size: 13px; }
.m-amounts label { display: flex; align-items: center; gap: 9px; }
.m-box { flex: 1; padding-left: 8px; border: 1px solid #666; line-height: 31px; }
.m-box--on { background: #f1f1f1; color: #444; }

.m-notice { margin: 15px 0 14px 20px; color: #f00; font-size: 11px; line-height: 16px; }
.m-people { display: grid; gap: 8px; padding: 0 19px 0 18px; }
.m-all {
  display: flex;
  align-items: center;
  gap: 15px;
  height: 33px;
  padding-left: 13px;
  border: 1px solid #bbb;
  color: #444;
  font-size: 14px;
}
.m-card { display: block; border: 1px solid #aaa; }
.m-card-main { display: flex; gap: 15px; padding: 8px 0 7px 13px; }
.mobile .check { border-color: #555; }
.check:checked::after {
  content: "";
  display: block;
  width: 8px;
  height: 4px;
  margin: 2px 0 0 2px;
  border: solid #333;
  border-width: 0 0 1px 1px;
  transform: rotate(-45deg);
}
.m-detail { display: grid; color: #777; font-size: 11px; line-height: 16px; }
.m-detail b { margin-bottom: 14px; color: #333; font-size: 12px; }
.m-due {
  display: block;
  padding-left: 42px;
  background: #e3e3e3;
  color: #000;
  font-size: 12px;
  line-height: 28px;
}
.m-total {
  display: flex;
  justify-content: space-between;
  margin: 24px 14px 29px;
  padding: 9px 12px 0 9px;
  border-top: 1px solid #777;
  color: #222;
  font-size: 14px;
  line-height: 20px;
}

.m-methods { padding: 25px 0 35px 18px; color: #444; font-size: 11px; line-height: 16px; }
.m-card-row { display: flex; align-items: center; gap: 9px; }
.m-pay { display: flex; align-items: center; gap: 17px; }
.mobile .strip { width: 89px; height: 14px; }
.mobile .badge--up { top: -19px; left: 17px; }
.mobile .badge--side { top: 8px; left: 98px; }
.m-sub { margin: 8px 41px 0 30px; }
.m-sub .plan { display: block; margin: 0; font-size: 10px; line-height: 14px; }
.field {
  display: grid;
  grid-template-columns: 59px minmax(0, 1fr);
  align-items: center;
  margin-top: 12px;
  color: #222;
}
.plan + .field { margin-top: 14px; }
.select { position: relative; display: block; }
.select select {
  width: 100%;
  height: 24px;
  padding-left: 8px;
  appearance: none;
  border: 1px solid #aaa;
  border-radius: 0;
  background: linear-gradient(#ddd, #ddd) right / 15px 100% no-repeat #fff;
  font-size: 13px;
}
.select::after {
  content: "";
  position: absolute;
  top: 10px;
  right: 4px;
  border: solid transparent;
  border-width: 4px 4px 0;
  border-top-color: #666;
}
.digits { display: flex; align-items: center; justify-content: space-between; }
.field input {
  width: 41px;
  height: 26px;
  border: 1px solid #888;
  background: #fff;
  font-size: 12px;
  text-align: center;
}
.field .exp { width: 89px; }
.exp::placeholder { color: #777; }
.plans { display: grid; gap: 4px; margin-top: 17px; color: #222; }
.term {
  display: flex;
  align-items: center;
  gap: 14px;
  height: 33px;
  padding: 0 12px 0 11px;
  background: #dedede;
}
.term--on { padding-left: 9px; border: 2px solid #555; background: #d6d6d6; }
.term--off { background: #f1f1f1; color: #bbb; }
.term-open { border: 1px solid #ccc; border-top: 0; }
.term-open .term { margin: 0 -1px; }
.term-open p { padding: 5px 0 8px 38px; font-size: 10px; line-height: 14px; }
.caret { margin-left: auto; border: solid transparent; border-width: 4px 4px 0; border-top-color: #000; }
.caret--up { border-width: 0 4px 4px; border-bottom-color: #000; }
.warn { margin-top: 9px; color: #d00; font-size: 10px; font-weight: 700; line-height: 15px; }
.m-pay--wallet { margin-top: 28px; }
.m-pay--wallet .wallet { width: 14px; height: 13px; margin-left: -9px; }
.m-pay--fax { margin-top: 25px; }
.m-pay--other { margin-top: 18px; }
.m-note { margin: 3px 0 0 32px; font-size: 10px; line-height: 15px; }

.m-safety { margin: 0 22px 19px 18px; padding-top: 14px; border-top: 1px solid #888; }
.m-safety .seal { width: 43px; height: 44px; margin: 0 auto 12px; }
.m-safety .rules { padding-left: 7px; line-height: 11px; }
.m-safety .more { margin-top: 8px; font-size: 9px; line-height: 14px; text-align: center; }
.m-foot { position: relative; }
.m-foot .badge { top: -7px; right: -7px; }
.m-confirm { display: block; width: 100%; height: 53px; border: 0; background: #f00; color: #fff; font-size: 14px; }
```
